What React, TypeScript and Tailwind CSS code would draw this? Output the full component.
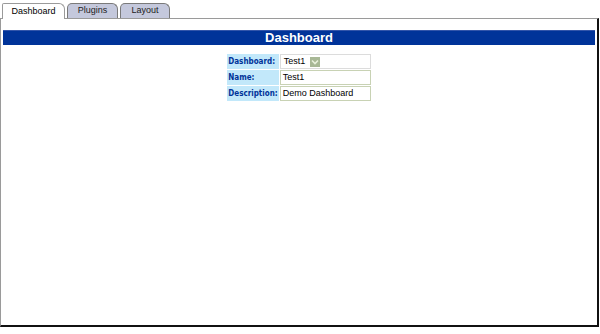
import React from "react";

export default function App() {
  const font = { fontFamily: '"Liberation Sans", Arial, sans-serif' };
  const label = { fontFamily: '"DejaVu Sans Condensed", "DejaVu Sans", sans-serif' };
  return (
    <div className="w-[600px] h-[334px] bg-white flex flex-col" style={font}>
      <div className="h-[18px] flex items-end pl-[2px] gap-[2px] shrink-0">
        <div className="w-[63px] h-[16px] bg-white border border-b-0 border-[#9a9a9a] rounded-tr-[6px] rounded-tl-[2px] text-[9px] text-black flex items-center justify-center relative top-[1px] z-10">
          Dashboard
        </div>
        <div className="w-[51px] h-[15px] bg-[#c4c8dc] border border-b-0 border-[#7a7a7a] rounded-tr-[6px] rounded-tl-[5px] text-[9px] text-[#222] flex items-center justify-center">
          Plugins
        </div>
        <div className="w-[50px] h-[15px] bg-[#c4c8dc] border border-b-0 border-[#7a7a7a] rounded-tr-[6px] rounded-tl-[5px] text-[9px] text-[#222] flex items-center justify-center">
          Layout
        </div>
      </div>
      <div className="h-[309px] border-t border-l border-t-[#9a9a9a] border-l-[#9a9a9a] border-r-2 border-b-2 border-r-[#111] border-b-[#111] mr-[1px] px-[2px] pt-[11px]">
        <div className="h-[15px] bg-[#003399] border-t border-[#3355aa] text-white font-bold text-[13px] leading-[14px] text-center">
          Dashboard
        </div>
        <div className="flex justify-center pt-[8px]">
          <table className="border-separate border-spacing-[1px]">
            <tbody>
              <tr>
                <td className="bg-[#c2e8fa] text-[#003399] font-bold text-[8px] h-[15px] w-[48px] px-[1px] leading-none" style={label}>Dashboard:</td>
                <td className="bg-white border border-[#dcdcdc] w-[91px] h-[15px] px-[1px]">
                  <div className="flex items-center h-[13px]">
                    <span className="text-[9px] text-black pl-[2px] w-[28px]" style={font}>Test1</span>
                    <span className="w-[10px] h-[10px] bg-[#a8b896] flex items-center justify-center">
                      <svg width="8" height="6" viewBox="0 0 8 6"><path d="M1 1.5 L4 4.5 L7 1.5" fill="none" stroke="#e8f0dc" strokeWidth="1.6" /></svg>
                    </span>
                  </div>
                </td>
              </tr>
              <tr>
                <td className="bg-[#c2e8fa] text-[#003399] font-bold text-[8px] h-[15px] px-[1px] leading-none" style={label}>Name:</td>
                <td className="bg-white h-[15px] p-0">
                  <div className="border border-[#c8d2b4] h-[15px] text-[9px] text-black flex items-center pl-[2px]" style={font}>Test1</div>
                </td>
              </tr>
              <tr>
                <td className="bg-[#c2e8fa] text-[#003399] font-bold text-[8px] h-[15px] px-[1px] leading-none" style={label}>Description:</td>
                <td className="bg-white h-[15px] p-0">
                  <div className="border border-[#c8d2b4] h-[15px] text-[9px] text-black flex items-center pl-[2px]" style={font}>Demo Dashboard</div>
                </td>
              </tr>
            </tbody>
          </table>
        </div>
      </div>
    </div>
  );
}
